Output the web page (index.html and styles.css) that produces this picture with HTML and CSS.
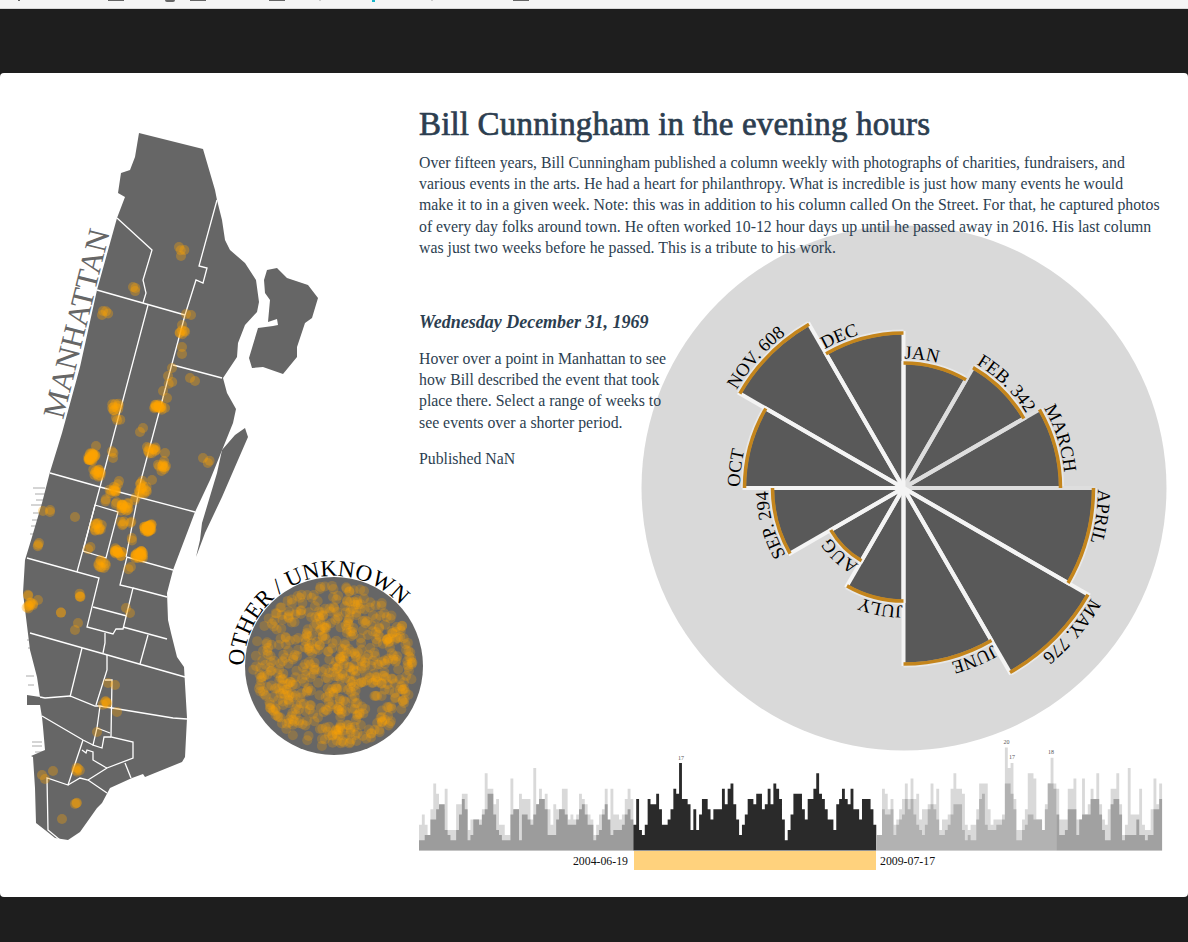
FILE: index.html
```
<!DOCTYPE html>
<html lang="en">
<head>
    <meta charset="UTF-8">
    <meta name="viewport" content="width=device-width, initial-scale=1.0">
    <title>Bill Cunningham in the evening hours</title>
    <link rel="stylesheet" href="styles.css">
</head>
<body>

    <div class="strip">
        <span class="mark mark-a"></span>
        <span class="mark mark-b"></span>
        <span class="mark mark-c"></span>
        <span class="mark mark-d"></span>
        <span class="mark mark-e"></span>
        <span class="mark mark-f"></span>
        <span class="mark mark-g"></span>
        <span class="mark mark-h"></span>
        <span class="mark mark-i"></span>
    </div>

    <div class="card">
        <!-- map of Manhattan, coordinates are page pixels -->
        <div class="map-col">
            <svg class="map" id="map" viewBox="0 73 419 824" width="419" height="824">
                <g class="piers">
                    <path d="M33 488h12M35 494h10M36 500h8M31 505h12M33 513h9M32 520h8M31 526h6M30 534h7M27 640h7M28 648h6M26 676h8M28 685h6M32 742h10M32 746h10M35 752h8"/>
                </g>
                <path class="land" d="M139 133L203 149L215 190L217 200L222 220L225 240L230 250L245 263L256 280L259 302L257 312L245 325L238 343L237 357L223 378L227 393L236 409L233 423L210 480L195 512L173 570L167 593L168 620L171 633L177 657L184 667L187 718L185 757L182 762L145 777L143 774L132 778L110 788L102 803L97 808L80 832L68 840L55 838L45 830L36 823L35 788L33 757L31 756L45 750L43 727L42 717L40 705L27 705L27 695L40 697L37 677L30 650L23 593L25 560L32 537L42 503L50 472L62 433L80 367L97 290L117 218L125 197L118 193L121 173L130 170L135 157Z"/>
                <path class="land" d="M267 270L277 268L287 278L308 285L318 298L312 318L305 323L297 347L297 357L283 374L263 367L252 368L249 358L258 328L273 326L278 325L277 319L268 322L270 300L265 293L264 280Z"/>
                <path class="land" d="M245 428L248 437L238 460L222 497L205 533L196 557L200 540L202 523L217 473L222 450L235 435Z"/>
                <g class="borders">
                    <path d="M117 218L152 250L143 280L146 293L143 303"/>
                    <path d="M217 200L199 266L207 268L203 283L196 280L185 315"/>
                    <path d="M97 290L185 315"/>
                    <path d="M148 305L100 487L77 572"/>
                    <path d="M185 315L141 480L126 557"/>
                    <path d="M173 365L222 378"/>
                    <path d="M50 473L100 487L195 512"/>
                    <path d="M95 505L118 512L106 558L83 551Z"/>
                    <path d="M27 558L99 578L87 627L113 634L116 629L123 629L133 588L120 585L127 557L173 570"/>
                    <path d="M133 588L167 597"/>
                    <path d="M93 607L127 616"/>
                    <path d="M123 627L167 639"/>
                    <path d="M30 633L185 677"/>
                    <path d="M148 635L140 664"/>
                    <path d="M105 633L105 643L103 653"/>
                    <path d="M82 648L70 697"/>
                    <path d="M107 655L107 670L96 705"/>
                    <path d="M40 697L45 698L70 696L95 706L100 706L173 718L187 719"/>
                    <path d="M105 680L112 680L111 737L133 742L133 758L107 768L88 780"/>
                    <path d="M100 706L97 728L93 745L102 748L104 737L111 737"/>
                    <path d="M97 728L110 733"/>
                    <path d="M42 716L83 740L93 745"/>
                    <path d="M83 740L68 785L47 778L48 830L60 840"/>
                    <path d="M68 785L80 778L88 780L107 793"/>
                    <path d="M82 750L86 753L87 750L93 752L93 760L105 767L107 768"/>
                    <path d="M125 763L131 778"/>
                </g>
                <g id="mapDots"></g>
                <text class="map-label" transform="translate(63 420) rotate(-76)">MANHATTAN</text>

                <circle class="land" cx="334" cy="666" r="89"/>
                <g id="otherDots"></g>
                <path id="otherArc" class="guide" d="M244 666A90 90 0 1 1 424 666"/>
                <text class="other-label"><textPath href="#otherArc">OTHER / UNKNOWN</textPath></text>
            </svg>
        </div>

        <!-- month wheel lies under the text -->
        <svg class="wheel" id="wheel" viewBox="640 222 530 532" width="530" height="532">
            <circle class="wheel-bg" cx="904" cy="488" r="262.5"/>
        </svg>

        <div class="content">
            <h1>Bill Cunningham in the evening hours</h1>
            <p class="intro">Over fifteen years, Bill Cunningham published a column weekly with photographs of charities, fundraisers, and various events in the arts. He had a heart for philanthropy. What is incredible is just how many events he would<br>make it to in a given week. Note: this was in addition to his column called On the Street. For that, he captured photos of every day folks around town. He often worked 10-12 hour days up until he passed away in 2016. His last column was just two weeks before he passed. This is a tribute to his work.</p>

            <div class="detail">
                <h3>Wednesday December 31, 1969</h3>
                <p>Hover over a point in Manhattan to see how Bill described the event that took place there. Select a range of weeks to see events over a shorter period.</p>
                <p>Published NaN</p>
            </div>

            <svg class="timeline" id="timeline" viewBox="419 735 769 140" width="769" height="140">
                <rect class="brush" x="634" y="851" width="242" height="19"/>
                <text class="date date-start" x="628" y="865">2004-06-19</text>
                <text class="date" x="880" y="865">2009-07-17</text>
            </svg>
        </div>
    </div>

    <script src="charts.js"></script>
</body>
</html>
```

FILE: styles.css
```
* {
    margin: 0;
    padding: 0;
    box-sizing: border-box;
}

body {
    font-family: "Liberation Serif", serif;
    background-color: #1e1e1e;
    color: #2c3e50;
    width: 1188px;
    height: 942px;
    overflow: hidden;
}

/* the browser bar left at the top of the capture */
.strip {
    position: relative;
    height: 9px;
    background-color: #f5f5f5;
    border-bottom: 1px solid #d8d8d8;
    margin-bottom: 64px;
}

.mark {
    position: absolute;
    top: 0;
    height: 1px;
    background-color: #666;
}

.mark-a { left: 18px; width: 2px; }
.mark-b { left: 108px; width: 16px; }
.mark-c { left: 165px; width: 10px; height: 2px; border-radius: 0 0 5px 5px; }
.mark-d { left: 190px; width: 16px; }
.mark-e { left: 269px; width: 16px; }
.mark-f { left: 319px; width: 2px; background-color: #ccc; }
.mark-g { left: 372px; width: 3px; height: 2px; background-color: #19b5c9; }
.mark-h { left: 431px; width: 2px; background-color: #ccc; }
.mark-i { left: 513px; width: 16px; }

.card {
    position: relative;
    display: flex;
    height: 824px;
    background-color: white;
    border-radius: 4px;
}

.map-col {
    flex: 0 0 419px;
}

.map {
    display: block;
    overflow: visible;
}

.land {
    fill: #666;
}

.borders path {
    fill: none;
    stroke: white;
    stroke-width: 1.3;
}

.piers path {
    fill: none;
    stroke: #aaa;
    stroke-width: 1;
}

.dot {
    fill: orange;
    fill-opacity: 0.33;
}

.other-dot {
    fill: orange;
    fill-opacity: 0.24;
}

.map-label {
    font-size: 31px;
    fill: #666;
}

.guide {
    fill: none;
}

.other-label {
    font-size: 23px;
    fill: black;
}

.wheel {
    position: absolute;
    left: 640px;
    top: 149px;
}

.wheel-bg {
    fill: #d9d9d9;
}

.wedge {
    fill: #595959;
}

.halo {
    fill: none;
    stroke: #fff;
    stroke-opacity: 0.4;
    stroke-width: 5;
}

.spoke {
    stroke: #f4f4f4;
    stroke-width: 4;
}

.spoke-dim {
    stroke: #dedede;
}

.rim {
    fill: none;
    stroke: #c4851c;
    stroke-width: 3.5;
}

.month {
    font-size: 18.5px;
    fill: black;
}

.content {
    position: relative;
    flex: 1;
    display: flex;
    flex-direction: column;
    padding-top: 31px;
}

h1 {
    font-size: 33px;
    font-weight: 400;
    line-height: 40px;
    letter-spacing: 0.17px;
    -webkit-text-stroke: 0.7px #2c3e50;
}

.intro {
    width: 745px;
    margin-top: 8px;
    font-size: 15.8px;
    line-height: 21.2px;
}

.detail {
    width: 252px;
    margin-top: 52px;
    font-size: 15.8px;
    line-height: 21.2px;
}

.detail h3 {
    font-size: 18px;
    font-style: italic;
    font-weight: 700;
    line-height: 24px;
    white-space: nowrap;
    margin-bottom: 14px;
}

.detail p {
    margin-bottom: 15px;
}

.timeline {
    display: block;
    margin-top: auto;
    margin-bottom: 22px;
}

.bar-dark { fill: #2a2a2a; }
.bar-left { fill: #9c9c9c; }
.bar-mid { fill: #b2b2b2; }
.bar-right { fill: #a1a1a1; }
.bar-light { fill: #d9d9d9; }

.brush {
    fill: #ffd27d;
}

.date {
    font-size: 11.8px;
    fill: #111;
}

.date-start {
    text-anchor: end;
}

.peak {
    font-size: 6px;
    fill: #555;
    text-anchor: middle;
}
```

FILE: charts.js
```
const SVG_NS = 'http://www.w3.org/2000/svg';

function el(parent, name, attrs, text) {
    const node = document.createElementNS(SVG_NS, name);
    for (const key in attrs) {
        node.setAttribute(key, attrs[key]);
    }
    if (text) node.textContent = text;
    parent.appendChild(node);
    return node;
}

// small seeded random so the picture stays the same on every load
let seed = 1969;
function rand() {
    seed = (seed * 16807) % 2147483647;
    return seed / 2147483647;
}

// ---- events on the map: x, y, how many at that spot
const mapEvents = [
    [179, 247, 1], [183, 252, 2], [181, 256, 1], [133, 287, 1], [137, 290, 2],
    [103, 311, 1], [106, 313, 2], [102, 315, 1], [186, 314, 1], [191, 315, 1],
    [183, 332, 6], [182, 325, 1], [182, 347, 1], [182, 354, 1], [172, 368, 1],
    [168, 376, 1], [170, 383, 2], [163, 391, 1], [167, 398, 1], [158, 407, 16],
    [165, 408, 1], [115, 407, 10], [118, 418, 3], [143, 428, 1], [140, 432, 1],
    [190, 378, 1], [195, 381, 1], [152, 450, 10], [147, 447, 1], [165, 453, 1],
    [162, 468, 10], [164, 461, 1], [92, 457, 24], [96, 446, 1], [113, 452, 2],
    [113, 458, 1], [97, 473, 14], [208, 463, 2], [203, 458, 1], [113, 490, 10],
    [117, 482, 2], [143, 490, 12], [140, 482, 3], [152, 480, 1], [105, 500, 2],
    [125, 507, 16], [117, 504, 2], [135, 498, 2], [148, 528, 30], [98, 527, 12],
    [123, 523, 4], [130, 523, 2], [133, 538, 2], [118, 552, 16], [139, 555, 24],
    [102, 564, 10], [90, 549, 2], [130, 569, 2], [48, 512, 2], [43, 511, 1],
    [75, 517, 1], [38, 547, 2], [39, 543, 1], [82, 595, 4], [30, 605, 9],
    [27, 597, 2], [38, 600, 1], [63, 615, 2], [78, 623, 1], [75, 630, 1],
    [126, 608, 1], [130, 613, 1], [108, 683, 1], [115, 685, 1], [105, 703, 5],
    [117, 712, 1], [97, 732, 1], [78, 770, 5], [53, 771, 1], [42, 775, 1],
    [45, 779, 1], [75, 805, 3], [62, 819, 1]
];

const mapDots = document.getElementById('mapDots');
mapEvents.forEach(function (ev) {
    for (let i = 0; i < ev[2]; i++) {
        const spread = ev[2] > 5 ? 4 : (ev[2] > 1 ? 2.4 : 0);
        el(mapDots, 'circle', {
            class: 'dot',
            cx: ev[0] + (rand() - 0.5) * 2 * spread,
            cy: ev[1] + (rand() - 0.5) * 2 * spread,
            r: 5
        });
    }
});

// ---- events without a place, scattered in the circle
const otherDots = document.getElementById('otherDots');
for (let i = 0; i < 600; i++) {
    const a = rand() * Math.PI * 2;
    const d = Math.sqrt(rand()) * 81;
    el(otherDots, 'circle', {
        class: 'other-dot',
        cx: 334 + Math.cos(a) * d,
        cy: 666 + Math.sin(a) * d,
        r: 5
    });
}

// ---- month wheel
const months = [
    ['JAN', 125], ['FEB. 342', 139], ['MARCH', 157], ['APRIL', 190],
    ['MAY. 776', 213], ['JUNE', 176], ['JULY', 113], ['AUG', 84],
    ['SEP. 294', 131], ['OCT', 159], ['NOV. 608', 189], ['DEC', 155]
];
const wheel = document.getElementById('wheel');
const CX = 903.5;
const CY = 488;

function point(r, deg) {
    const a = deg * Math.PI / 180;
    return (CX + Math.sin(a) * r).toFixed(2) + ' ' + (CY - Math.cos(a) * r).toFixed(2);
}

function arc(r, from, to) {
    return 'M' + point(r, from) + 'A' + r + ' ' + r + ' 0 0 1 ' + point(r, to);
}

function spoke(r, deg) {
    // the spokes to the upper right are a shade darker in the capture
    const dim = deg > 0 && deg <= 90;
    el(wheel, 'path', {
        class: dim ? 'spoke spoke-dim' : 'spoke',
        d: 'M' + point(0, 0) + 'L' + point(r + 2, deg)
    });
}

months.forEach(function (m, i) {
    const from = i * 30;
    el(wheel, 'path', {
        class: 'wedge',
        d: 'M' + point(0, 0) + 'L' + arc(m[1], from, from + 30).slice(1) + 'Z'
    });
    el(wheel, 'path', { class: 'halo', d: arc(m[1] + 1, from, from + 30) });
});

months.forEach(function (m, i) {
    spoke(m[1], i * 30);
    spoke(m[1], i * 30 + 30);
});

months.forEach(function (m, i) {
    const from = i * 30;
    el(wheel, 'path', { class: 'rim', d: arc(m[1], from, from + 30) });
    const id = 'monthArc' + i;
    // the label may run past the wedge, so the guide is longer than 30 degrees
    el(wheel, 'path', { id: id, class: 'guide', d: arc(m[1] + 4.5, from + 0.4, from + 90) });
    const label = el(wheel, 'text', { class: 'month' });
    el(label, 'textPath', { href: '#' + id }, m[0]);
});

// ---- weeks along the bottom, heights are counts
const UNIT = 5.15;
const STEP = 2.858;
const BASE = 850.5;

const left = [2,2,3,3,6,6,8,9,9,4,3,2,2,4,7,10,8,2,3,6,6,5,7,8,11,11,7,4,3,2,2,2,7,8,8,2,7,7,6,5,7,9,10,10,8,3,3,3,6,8,8,7,5,5,5,6,8,9,7,5,5,2,3,4,7,9,6,3,4,4,4,5,7,8,6];
const leftTop = [5,7,5,3,8,13,11,8,8,12,4,4,4,9,9,11,11,4,6,6,6,6,8,15,12,12,9,10,5,5,3,3,14,8,8,11,10,10,10,6,16,9,12,10,11,8,5,9,8,8,12,12,6,7,6,7,11,10,9,7,6,3,5,7,8,12,4,12,7,7,6,7,10,12,10];
const selected = [5,10,4,3,5,10,9,9,11,8,5,5,6,8,12,11,17,10,10,9,4,8,4,7,10,10,8,6,8,8,8,12,9,12,13,9,6,3,5,7,10,10,9,11,11,8,9,12,9,13,12,10,6,2,4,7,11,11,11,8,6,10,10,12,15,11,10,8,6,6,4,9,10,12,10,9,12,8,8,6,10,10,10,8,5];
const right = [3,3,8,7,7,8,3,5,6,7,10,8,10,7,5,4,3,5,8,9,8,6,3,3,4,5,7,9,9,9,4,2,3,2,2,6,10,11,5,4,4,4,5,5,6,13,13,11,8,2,2,4,5,7,7,6,6,6,4,8,13,13,12,7,3,3,4,8,8,8,3,6,7,7,7,10,10,10,7,4,2,2,9,10,10,7,2,3,3,3,3,6,3,3,2,3,3,8,8,10];
const rightTop = [3,3,12,11,8,10,5,6,8,10,13,10,14,10,11,6,8,8,9,13,9,12,4,6,6,7,12,15,12,12,11,5,4,5,5,8,13,13,13,8,5,6,6,6,7,20,16,17,10,4,4,6,8,15,15,14,6,6,4,9,13,18,13,12,6,6,6,12,12,14,6,6,14,7,9,12,10,15,9,6,5,8,12,12,15,9,3,5,16,7,7,7,12,5,4,4,8,14,9,13];

const timeline = document.getElementById('timeline');

// one skyline per series, so no seams show between the bars
function skyline(values, startIndex, cls) {
    let x = 419 + startIndex * STEP;
    let d = 'M' + x.toFixed(2) + ' ' + BASE;
    values.forEach(function (v) {
        const y = (BASE - v * UNIT).toFixed(2);
        d += 'V' + y + 'H' + (x + STEP).toFixed(2);
        x += STEP;
    });
    d += 'V' + BASE + 'Z';
    el(timeline, 'path', { class: cls, d: d });
}

const rightStart = left.length + selected.length;
skyline(leftTop, 0, 'bar-light');
skyline(left, 0, 'bar-left');
skyline(selected, left.length, 'bar-dark');
skyline(rightTop, rightStart, 'bar-light');
skyline(right.slice(0, 63), rightStart, 'bar-mid');
skyline(right.slice(63), rightStart + 63, 'bar-right');

// counts printed over the tallest weeks
[[681, 760, '17'], [1006.5, 744, '20'], [1012, 759, '17'], [1051, 754, '18']].forEach(function (p) {
    el(timeline, 'text', { class: 'peak', x: p[0], y: p[1] }, p[2]);
});
```
